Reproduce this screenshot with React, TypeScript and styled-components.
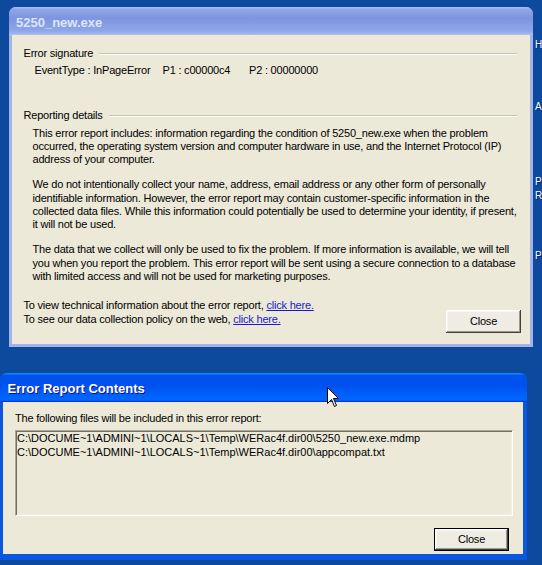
import React from "react";
import styled, { createGlobalStyle, css } from "styled-components";

const GlobalStyle = createGlobalStyle`
  html, body { margin: 0; padding: 0; background: #0d4a9e; }
  body { font-family: "Liberation Sans", Arial, sans-serif; }
`;

const Desktop = styled.div`
  position: relative;
  width: 542px;
  height: 565px;
  overflow: hidden;
  background: #0d4a9e;
`;

const IconLetter = styled.span<{ $x: number; $y: number }>`
  position: absolute;
  left: ${(p) => p.$x}px;
  top: ${(p) => p.$y}px;
  color: #fff;
  font: 10px/12px "Liberation Sans", Arial, sans-serif;
  text-shadow: 1px 1px 1px #00205a;
`;

const Window = styled.section<{ $x: number; $y: number; $w: number; $h: number; $active?: boolean }>`
  position: absolute;
  left: ${(p) => p.$x}px;
  top: ${(p) => p.$y}px;
  width: ${(p) => p.$w}px;
  height: ${(p) => p.$h}px;
  display: flex;
  flex-direction: column;
  border-radius: 7px 7px 0 0;
  overflow: hidden;
  background: ${(p) => (p.$active ? "#0b56df" : "#a2b3ea")};
`;

const activeTitle = css`
  background: linear-gradient(
    180deg,
    #0997ff,
    #0053ee 8%,
    #0050ee 40%,
    #0066ff 88%,
    #0066ff 93%,
    #005bff 95%,
    #003dd7 96%,
    #003dd7
  );
  color: #fff;
  text-shadow: 1px 1px #0f1089;
`;

const inactiveTitle = css`
  background: linear-gradient(
    180deg,
    #b0c0f0,
    #90a6e8 8%,
    #7d95df 40%,
    #8fa6e8 85%,
    #a0b3ec 95%,
    #b7c4f1
  );
  color: #dde6fa;
`;

const TitleBar = styled.header<{ $active?: boolean; $h: number; $pl: number }>`
  flex: none;
  height: ${(p) => p.$h}px;
  box-sizing: border-box;
  display: flex;
  align-items: center;
  padding: 2px 0 0 ${(p) => p.$pl}px;
  font: bold 13px/1 "Liberation Sans", Arial, sans-serif;
  ${(p) => (p.$active ? activeTitle : inactiveTitle)}
`;

const Frame = styled.div<{ $l: number; $r: number; $b: number }>`
  flex: 1;
  min-height: 0;
  display: flex;
  padding: 0 ${(p) => p.$r}px ${(p) => p.$b}px ${(p) => p.$l}px;
`;

const Body = styled.div<{ $pad: string }>`
  flex: 1;
  display: flex;
  flex-direction: column;
  padding: ${(p) => p.$pad};
  background: #ece9d8;
  color: #000;
  font-size: 11px;
  line-height: 13.33px;
  letter-spacing: -0.2px;
  white-space: nowrap;
`;

const GroupHeader = styled.div<{ $mt?: number }>`
  display: flex;
  align-items: center;
  gap: 6px;
  margin: ${(p) => p.$mt ?? 0}px 4px 0 0;
  &::after {
    content: "";
    flex: 1;
    height: 0;
    border-top: 1px solid #c5c2b2;
    border-bottom: 1px solid #ffffff;
  }
`;

const SignatureRow = styled.div`
  display: flex;
  margin-top: 3.5px;
  padding-left: 11px;
`;

const SigItem = styled.span<{ $w?: number }>`
  flex: none;
  width: ${(p) => (p.$w ? `${p.$w}px` : "auto")};
`;

const Details = styled.div`
  margin-top: 4px;
  padding-left: 9px;
`;

const Para = styled.p`
  margin: 0;
  & + & {
    margin-top: 11.7px;
  }
`;

const Footer = styled.div<{ $mt: number; $end?: boolean }>`
  display: flex;
  justify-content: ${(p) => (p.$end ? "flex-end" : "space-between")};
  align-items: flex-start;
  margin-top: ${(p) => p.$mt}px;
`;

const LinkLines = styled.div`
  line-height: 14px;
`;

const Link = styled.a`
  color: #1a1acc;
  text-decoration: underline;
  cursor: pointer;
`;

const Button = styled.button<{ $default?: boolean; $mt: number; $mr?: number }>`
  flex: none;
  width: 75px;
  height: 23px;
  margin-top: ${(p) => p.$mt}px;
  margin-right: ${(p) => p.$mr ?? 0}px;
  padding: 0;
  font: 11px/1 "Liberation Sans", Arial, sans-serif;
  letter-spacing: -0.2px;
  color: #000;
  background: #efede3;
  box-sizing: border-box;
  border: ${(p) => (p.$default ? "1px solid #000" : "none")};
  box-shadow: inset -1px -1px #404040, inset 1px 1px #ffffff, inset -2px -2px #9d9a8a,
    inset 2px 2px #f7f6f0;
`;

const Caption = styled.div`
  margin: 0;
`;

const ListBox = styled.div`
  height: 86px;
  box-sizing: border-box;
  margin: 4.4px 0 0 -0.5px;
  padding: 1.3px 1.5px;
  border: 1px solid;
  border-color: #aca899 #ffffff #ffffff #aca899;
  box-shadow: inset 1px 1px #716f64, inset -1px -1px #f1efe2;
  background: #ece9d8;
  letter-spacing: 0;
`;

const Cursor = styled.svg`
  position: absolute;
  left: 327px;
  top: 387px;
`;

const files = [
  "C:\\DOCUME~1\\ADMINI~1\\LOCALS~1\\Temp\\WERac4f.dir00\\5250_new.exe.mdmp",
  "C:\\DOCUME~1\\ADMINI~1\\LOCALS~1\\Temp\\WERac4f.dir00\\appcompat.txt",
];

export default function App() {
  return (
    <Desktop>
      <GlobalStyle />
      <IconLetter $x={535} $y={39}>H</IconLetter>
      <IconLetter $x={535} $y={101}>A</IconLetter>
      <IconLetter $x={535} $y={176}>P</IconLetter>
      <IconLetter $x={535} $y={189.5}>R</IconLetter>
      <IconLetter $x={535} $y={250}>P</IconLetter>

      <Window $x={9} $y={7} $w={524} $h={340}>
        <TitleBar $h={28} $pl={7}>5250_new.exe</TitleBar>
        <Frame $l={3} $r={3} $b={3}>
          <Body $pad="12px 9px 0 11.5px">
            <GroupHeader>Error signature</GroupHeader>
            <SignatureRow>
              <SigItem $w={128}>EventType : InPageError</SigItem>
              <SigItem $w={86.5}>P1 : c00000c4</SigItem>
              <SigItem>P2 : 00000000</SigItem>
            </SignatureRow>
            <GroupHeader $mt={32.3}>Reporting details</GroupHeader>
            <Details>
              <Para>
                This error report includes: information regarding the condition of 5250_new.exe when the problem
                <br />
                occurred, the operating system version and computer hardware in use, and the Internet Protocol (IP)
                <br />
                address of your computer.
              </Para>
              <Para>
                We do not intentionally collect your name, address, email address or any other form of personally
                <br />
                identifiable information. However, the error report may contain customer-specific information in the
                <br />
                collected data files. While this information could potentially be used to determine your identity, if present,
                <br />
                it will not be used.
              </Para>
              <Para>
                The data that we collect will only be used to fix the problem. If more information is available, we will tell
                <br />
                you when you report the problem. This error report will be sent using a secure connection to a database
                <br />
                with limited access and will not be used for marketing purposes.
              </Para>
            </Details>
            <Footer $mt={14.3}>
              <LinkLines>
                To view technical information about the error report, <Link>click here.</Link>
                <br />
                To see our data collection policy on the web, <Link>click here.</Link>
              </LinkLines>
              <Button $mt={12.4}>Close</Button>
            </Footer>
          </Body>
        </Frame>
      </Window>

      <Window $x={0} $y={373} $w={527} $h={187} $active>
        <TitleBar $h={29} $pl={7.5} $active>
          Error Report Contents
        </TitleBar>
        <Frame $l={3} $r={4} $b={6}>
          <Body $pad="10.3px 10px 0 12px">
            <Caption>The following files will be included in this error report:</Caption>
            <ListBox>
              {files.map((f) => (
                <div key={f}>{f}</div>
              ))}
            </ListBox>
            <Footer $mt={0} $end>
              <Button $default $mt={12} $mr={4}>
                Close
              </Button>
            </Footer>
          </Body>
        </Frame>
      </Window>

      <Cursor width="13" height="21" viewBox="0 0 13 21">
        <path
          d="M0.5 0.5 L0.5 16.5 L4.5 12.5 L7.5 19.5 L9.5 18.5 L6.5 11.5 L11.5 11.5 Z"
          fill="#fff"
          stroke="#000"
          strokeWidth="1"
          strokeLinejoin="miter"
        />
      </Cursor>
    </Desktop>
  );
}
